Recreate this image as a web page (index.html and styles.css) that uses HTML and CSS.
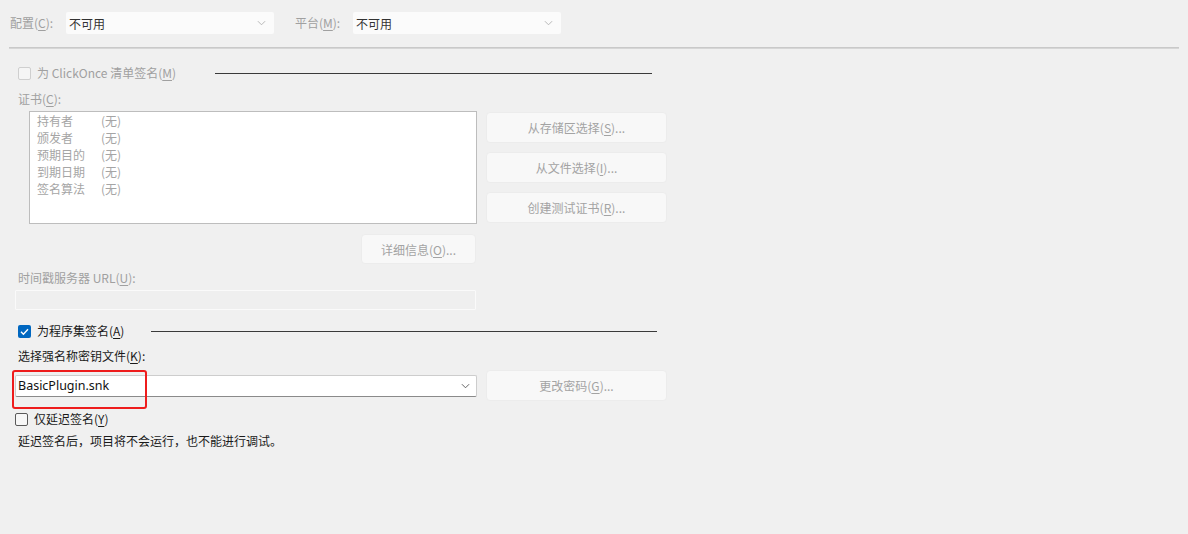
FILE: index.html
```html
<!DOCTYPE html>
<html lang="zh-CN">
<head>
<meta charset="utf-8">
<title>签名</title>
<link rel="stylesheet" href="styles.css">
</head>
<body>
<div class="page">
  <div class="toprow">
    <span class="lbl dis lbl-cfg">配置(<u>C</u>):</span>
    <div class="select"><span>不可用</span><svg class="chev" viewBox="0 0 10 6" width="9" height="6"><path d="M1 1 L5 5 L9 1" fill="none" stroke="#b0b0b0" stroke-width="1"/></svg></div>
    <span class="lbl dis lbl-plat">平台(<u>M</u>):</span>
    <div class="select"><span>不可用</span><svg class="chev" viewBox="0 0 10 6" width="9" height="6"><path d="M1 1 L5 5 L9 1" fill="none" stroke="#b0b0b0" stroke-width="1"/></svg></div>
  </div>
  <div class="sep"></div>

  <div class="grouprow row-clickonce">
    <span class="cb cb-dis"></span>
    <span class="gtext dis gtext-1">为 ClickOnce 清单签名(<u>M</u>)</span>
    <span class="gline gline-1"></span>
  </div>

  <div class="lbl dis cert-lbl">证书(<u>C</u>):</div>
  <div class="cert">
    <div class="listbox">
      <div class="lrow"><span class="k">持有者</span><span>(无)</span></div>
      <div class="lrow"><span class="k">颁发者</span><span>(无)</span></div>
      <div class="lrow"><span class="k">预期目的</span><span>(无)</span></div>
      <div class="lrow"><span class="k">到期日期</span><span>(无)</span></div>
      <div class="lrow"><span class="k">签名算法</span><span>(无)</span></div>
    </div>
    <div class="btncol">
      <div class="btn">从存储区选择(<u>S</u>)...</div>
      <div class="btn">从文件选择(<u>I</u>)...</div>
      <div class="btn">创建测试证书(<u>R</u>)...</div>
    </div>
  </div>
  <div class="detailrow"><div class="btn btn-detail">详细信息(<u>O</u>)...</div></div>

  <div class="lbl dis url-lbl">时间戳服务器 URL(<u>U</u>):</div>
  <div class="urlbox"></div>

  <div class="grouprow row-asm">
    <span class="cb cb-on"><svg viewBox="0 0 13 13" width="13" height="13"><path d="M3 6.8 L5.4 9.2 L10 4.2" fill="none" stroke="#fff" stroke-width="1.4"/></svg></span>
    <span class="gtext gtext-2">为程序集签名(<u>A</u>)</span>
    <span class="gline gline-2"></span>
  </div>

  <div class="lbl key-lbl">选择强名称密钥文件(<u>K</u>):</div>
  <div class="keyrow">
    <div class="combo">
      <span class="combo-text">BasicPlugin.snk</span>
      <svg class="chev" viewBox="0 0 10 6" width="9" height="6"><path d="M1 1 L5 5 L9 1" fill="none" stroke="#555" stroke-width="1"/></svg>
      <div class="highlight"></div>
    </div>
    <div class="btn btn-pwd">更改密码(<u>G</u>)...</div>
  </div>

  <div class="grouprow row-delay">
    <span class="cb cb-off"></span>
    <span class="gtext">仅延迟签名(<u>Y</u>)</span>
  </div>
  <div class="lbl note">延迟签名后，项目将不会运行，也不能进行调试。</div>
</div>
</body>
</html>
```

FILE: styles.css
```css
html, body {
  margin: 0;
  padding: 0;
  background: #f0f0f0;
}
body {
  font-family: "Noto Sans CJK SC", "Noto Sans", sans-serif;
  font-size: 12px;
  color: #1a1a1a;
  width: 1188px;
  height: 534px;
  overflow: hidden;
}
u { text-decoration: underline; text-underline-offset: 2px; }
.page { padding-top: 12px; }
.dis { color: #a0a0a0; }
.lbl { line-height: 16px; display: block; }

.toprow {
  display: flex;
  align-items: center;
  padding-left: 10px;
  height: 22px;
}
.toprow .lbl { display: inline-block; }
.lbl-cfg { width: 56px; }
.lbl-plat { width: 58px; margin-left: 21px; }
.select {
  width: 208px;
  height: 22px;
  background: #fbfbfb;
  border-radius: 2px;
  display: flex;
  align-items: center;
  justify-content: space-between;
  padding: 0 8px 0 3px;
  box-sizing: border-box;
  color: #333;
}

.sep {
  margin: 13px 0 0 9px;
  width: 1170px;
  height: 0;
  border-top: 1px solid #c9c9c9;
  border-bottom: 1px solid #d6d6d6;
}

.grouprow {
  display: flex;
  align-items: center;
  height: 14px;
  padding-left: 18px;
}
.row-clickonce { margin-top: 17px; }
.cb {
  width: 13px;
  height: 13px;
  box-sizing: border-box;
  border-radius: 2px;
  flex: none;
  display: block;
}
.cb-dis { border: 1px solid #cfcfcf; background: #f5f5f5; }
.cb-on { background: #0067c0; }
.cb-on svg { display: block; }
.cb-off { border: 1px solid #5a5a5a; background: #f7f7f7; }
.gtext { margin-left: 6px; line-height: 16px; white-space: nowrap; }
.gtext-1 { width: 178px; }
.gtext-2 { width: 114px; }
.gline { height: 1px; background: #3a3a3a; display: block; }
.gline-1 { width: 437px; }
.gline-2 { width: 506px; }

.cert-lbl { margin: 11px 0 0 18px; }
.cert {
  display: flex;
  gap: 9px;
  margin: 4px 0 0 29px;
}
.listbox {
  width: 448px;
  height: 113px;
  box-sizing: border-box;
  background: #fff;
  border: 1px solid #bdbdbd;
  padding: 0 0 0 7px;
  color: #a5a5a5;
}
.lrow { line-height: 17px; display: flex; }
.lrow .k { width: 64px; }
.btncol {
  display: flex;
  flex-direction: column;
  gap: 9px;
  padding-top: 1px;
}
.btn {
  width: 181px;
  height: 31px;
  box-sizing: border-box;
  background: #f8f8f8;
  border: 1px solid #ececec;
  border-radius: 4px;
  display: flex;
  align-items: center;
  justify-content: center;
  color: #a3a3a3;
}
.detailrow { padding-left: 361px; margin-top: 10px; }
.btn-detail { width: 115px; height: 30px; }

.url-lbl { margin: 6px 0 0 18px; }
.urlbox {
  margin: 4px 0 0 15px;
  width: 461px;
  height: 20px;
  box-sizing: border-box;
  border: 1px solid #fafafa;
  background: #efefef;
  border-radius: 1px;
}

.row-asm { margin-top: 14px; }
.key-lbl { margin: 10px 0 0 18px; }
.keyrow {
  display: flex;
  align-items: center;
  gap: 9px;
  margin: 6px 0 0 15px;
  height: 31px;
}
.combo {
  position: relative;
  width: 462px;
  height: 22px;
  box-sizing: border-box;
  background: #fff;
  border: 1px solid #cdcdcd;
  border-bottom-color: #8a8a8a;
  border-radius: 2px;
  display: flex;
  align-items: center;
  justify-content: space-between;
  padding: 0 6px 0 2px;
}
.combo-text {
  font-family: "Noto Sans", sans-serif;
  font-size: 12.5px;
  color: #111;
}
.highlight {
  position: absolute;
  left: -4px;
  top: -6px;
  width: 135px;
  height: 39px;
  box-sizing: border-box;
  border: 2px solid #ee1c1c;
  border-radius: 3px;
}
.btn-pwd { height: 31px; }

.row-delay { margin-top: 11px; padding-left: 15px; }
.note { margin: 7px 0 0 18px; }
```
